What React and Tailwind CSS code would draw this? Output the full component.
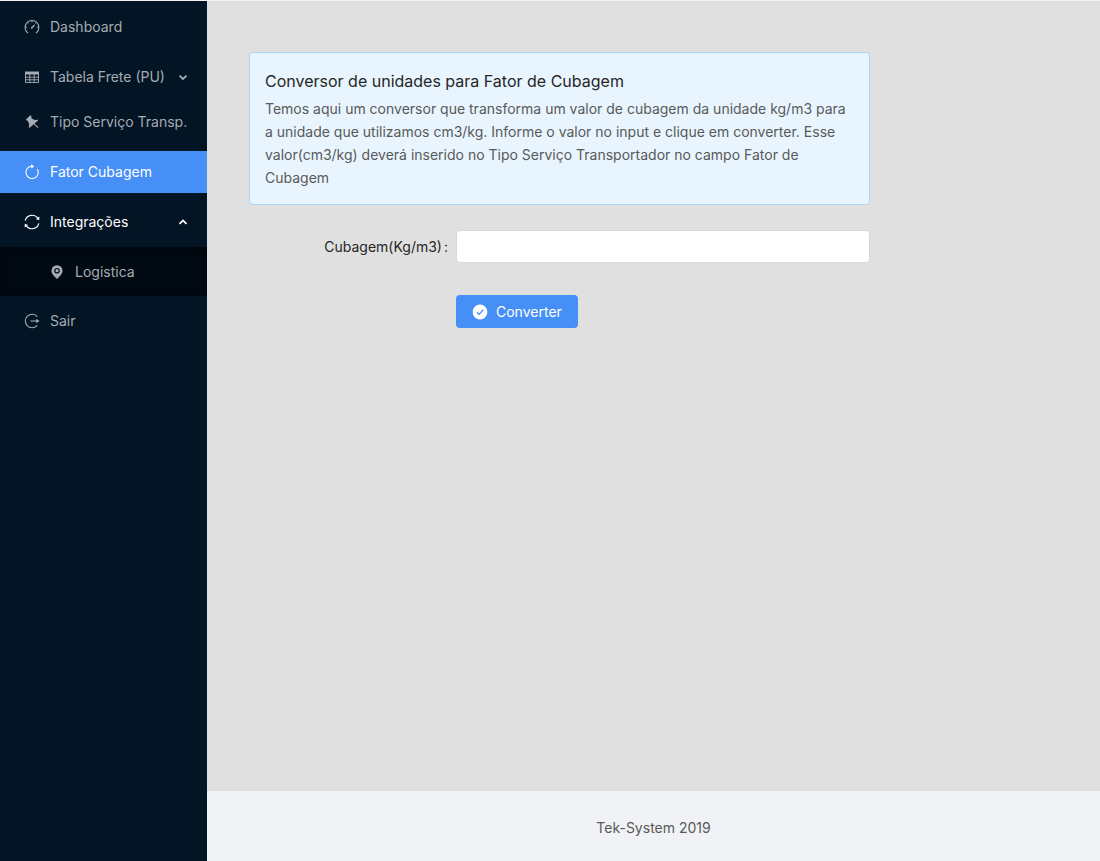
const link = "flex items-center pl-6 pr-4 whitespace-nowrap";

function Icon({ children }) {
  return (
    <svg viewBox="0 0 16 16" className="size-4 shrink-0" fill="none" stroke="currentColor" strokeWidth="1.1" aria-hidden="true">
      {children}
    </svg>
  );
}

function DashboardIcon() {
  return (
    <Icon>
      <path d="M4.2 13.6H3.4A6.9 6.9 0 1 1 12.6 13.6H11.8" />
      <path d="M8 1.5V3.4M3.4 3.6 4.5 4.7M12.6 3.6 11.5 4.7M1.3 8.3H3.1M14.7 8.3H12.9" strokeWidth="0.9" />
      <path d="M7.6 9 10.6 6" strokeWidth="1.3" />
      <circle cx="7.8" cy="8.8" r="0.9" fill="currentColor" stroke="none" />
    </Icon>
  );
}

function TableIcon() {
  return (
    <Icon>
      <path d="M1 2.5H15V5.5H1Z" fill="currentColor" stroke="none" />
      <path d="M1.5 3V13.5H14.5V3M1.5 8.2H14.5M1.5 10.8H14.5M5.8 5V13.5M10.2 5V13.5" strokeWidth="0.9" />
    </Icon>
  );
}

function PushpinIcon() {
  return (
    <Icon>
      <path
        d="M2.1 5.2 6.4 1.2 7.3 1.9 7.5 4.2 10.6 6.1 13.9 5.7 14 6.6 5.6 13.8 4.7 13.4 5.2 10.2 3.9 7.1 2.3 6.3Z"
        fill="currentColor"
        stroke="none"
      />
      <path d="M9.4 9.4 14.2 13.7" />
    </Icon>
  );
}

function ReloadIcon() {
  return (
    <Icon>
      <path d="M13.3 5A6.2 6.2 0 1 1 4 3.7 6 6 0 0 1 7.4 2.3" />
      <path d="M7 0.2 10.3 2.2 7.4 4.4Z" fill="currentColor" stroke="none" />
    </Icon>
  );
}

function SyncIcon() {
  return (
    <Icon>
      <path d="M1.2 6.7A7 7 0 0 1 14 4.6M14.8 9.3A7 7 0 0 1 2 11.4" />
      <path d="M15.4 2.4 15.2 6.3 11.9 5.1ZM0.6 13.6 0.8 9.7 4.1 10.9Z" fill="currentColor" stroke="none" />
    </Icon>
  );
}

function PlaceIcon() {
  return (
    <Icon>
      <path
        d="M8 1.2A5.5 5.5 0 0 0 2.5 6.7C2.5 10 5.2 12.2 8 14.9 10.8 12.2 13.5 10 13.5 6.7A5.5 5.5 0 0 0 8 1.2ZM8 3.9A2.8 2.8 0 1 1 8 9.5 2.8 2.8 0 0 1 8 3.9Z"
        fill="currentColor"
        fillRule="evenodd"
        stroke="none"
      />
      <circle cx="8" cy="6.7" r="1.6" fill="currentColor" stroke="none" />
    </Icon>
  );
}

function LogoutIcon() {
  return (
    <Icon>
      <path d="M13.3 3.6A6.8 6.8 0 1 0 13.3 12.4" />
      <path d="M6.5 8H13" />
      <path d="M12.3 5.8 15.5 8 12.3 10.2Z" fill="currentColor" stroke="none" />
    </Icon>
  );
}

function CheckIcon() {
  return (
    <Icon>
      <circle cx="8" cy="8" r="7.4" fill="currentColor" stroke="none" />
      <path d="M4.8 8.2 7.1 10.4 11.3 5.7" className="stroke-[#468ff7]" strokeWidth="1.3" />
    </Icon>
  );
}

function Chevron({ up }) {
  return (
    <svg viewBox="0 0 10 10" className="ml-auto mr-[3px] size-[10px] shrink-0" fill="none" stroke="currentColor" strokeWidth="1.8" aria-hidden="true">
      <path d={up ? "M1.5 6.8 5 3.4 8.5 6.8" : "M1.5 3.6 5 7 8.5 3.6"} />
    </svg>
  );
}

export default function App() {
  return (
    <div className="flex min-h-screen border-t border-[#f0f2f5] bg-[#e0e0e0] font-['Inter',sans-serif] text-sm text-[#595959]">
      <nav className="w-[207px] shrink-0 bg-[#031424] text-[#a5acb3]">
        <ul>
          <li>
            <a href="#dashboard" className={`${link} h-[52px] gap-[10px]`}>
              <DashboardIcon />
              Dashboard
            </a>
          </li>
          <li>
            <button type="button" aria-expanded="false" className={`${link} h-12 w-full gap-[10px]`}>
              <TableIcon />
              Tabela Frete (PU)
              <Chevron />
            </button>
          </li>
          <li>
            <a href="#tipo" className={`${link} mb-2 h-[42px] gap-[10px]`}>
              <PushpinIcon />
              Tipo Serviço Transp.
            </a>
          </li>
          <li>
            <a href="#fator" aria-current="page" className={`${link} h-[42px] gap-[10px] bg-[#468ff7] text-white`}>
              <ReloadIcon />
              Fator Cubagem
            </a>
          </li>
          <li>
            <button type="button" aria-expanded="true" className={`${link} h-[54px] w-full gap-[10px] pt-1 text-white`}>
              <SyncIcon />
              Integrações
              <Chevron up />
            </button>
            <ul className="bg-[#010912] shadow-[inset_0_2px_8px_rgba(0,0,0,0.45)]">
              <li>
                <a href="#logistica" className="flex h-[49px] items-center gap-[10px] pl-[49px]">
                  <PlaceIcon />
                  Logistica
                </a>
              </li>
            </ul>
          </li>
          <li>
            <a href="#sair" className={`${link} h-[50px] gap-[10px]`}>
              <LogoutIcon />
              Sair
            </a>
          </li>
        </ul>
      </nav>
      <div className="flex min-w-0 flex-1 flex-col">
        <main className="flex-1 px-[42px] pt-[51px]">
          <div className="max-w-[621px]">
            <section className="rounded border border-[#a6d6fb] bg-[#e8f5fe] px-[15px] pt-4 pb-[15px]">
              <h1 className="mb-1 text-base leading-6 text-[#262626]">Conversor de unidades para Fator de Cubagem</h1>
              <p className="leading-[23px]">
                Temos aqui um conversor que transforma um valor de cubagem da unidade kg/m3 para a unidade que utilizamos
                cm3/kg. Informe o valor no input e clique em converter. Esse valor(cm3/kg) deverá inserido no Tipo Serviço
                Transportador no campo Fator de Cubagem
              </p>
            </section>
            <form className="mt-[25px] grid grid-cols-3 gap-y-8" onSubmit={(e) => e.preventDefault()}>
              <label htmlFor="cubagem" className="self-center pr-2 text-right text-[#262626]">
                Cubagem(Kg/m3)<span className="ml-[2px]">:</span>
              </label>
              <input id="cubagem" type="text" className="col-span-2 h-[33px] rounded border border-[#d9d9d9] bg-white px-3" />
              <button type="submit" className="col-start-2 flex h-[33px] items-center gap-2 justify-self-start rounded bg-[#468ff7] px-4 text-white">
                <CheckIcon />
                Converter
              </button>
            </form>
          </div>
        </main>
        <footer className="bg-[#f0f2f5] px-12 pt-[26px] pb-[22px] text-center leading-[22px]">Tek-System 2019</footer>
      </div>
    </div>
  );
}
